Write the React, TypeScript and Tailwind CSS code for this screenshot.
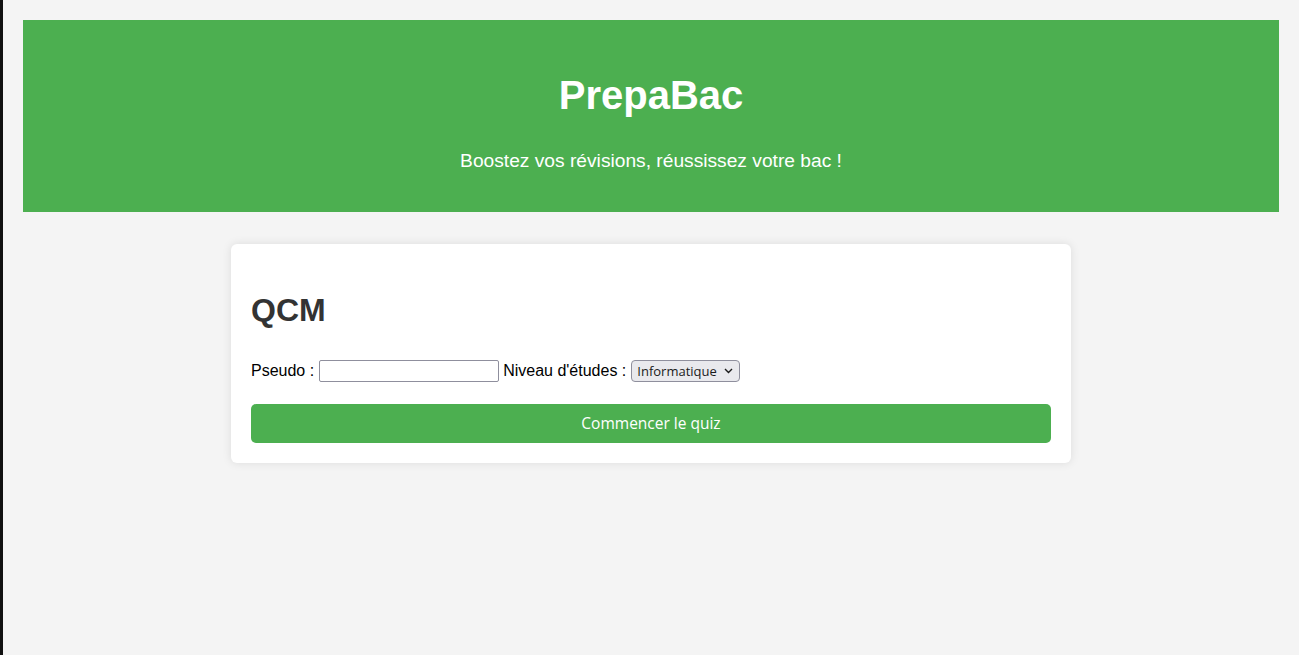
import React from "react";

// ==========================================
// HEADER
// ==========================================
const Header = () => (
  <header className="bg-[#4caf50] text-white text-center h-[192px] pt-[52px]">
    <h1 className="text-[40px] font-bold leading-[46px]">PrepaBac</h1>
    <p className="mt-[32px] text-[19.2px] leading-[22px]">
      Boostez vos révisions, réussissez votre bac !
    </p>
  </header>
);

// ==========================================
// QUIZ FORM
// ==========================================
const QuizCard = () => (
  <div className="w-[840px] mx-auto mt-[32px] bg-white rounded-[6px] shadow-[0_0_10px_rgba(0,0,0,0.1)] px-[20px] pt-[48px] pb-[20px]">
    <h2 className="text-[32px] font-bold leading-[37px] text-[#333]">QCM</h2>
    <form className="mt-[25px]" onSubmit={(e) => e.preventDefault()}>
      <div className="flex items-center h-[34px] text-[16px] text-black">
        <label htmlFor="pseudo">Pseudo :</label>
        <input
          id="pseudo"
          type="text"
          className="ml-[5px] w-[180px] h-[22px] border border-[#8f8f9d] rounded-[2px] bg-white px-[2px]"
        />
        <label htmlFor="niveau" className="ml-[4px]">
          Niveau d'études :
        </label>
        <div className="relative ml-[5px]">
          <select
            id="niveau"
            defaultValue="info"
            className="appearance-none block w-[109px] h-[22px] border border-[#8f8f9d] rounded-[4px] bg-[#e9e9ed] text-[13px] leading-[20px] pl-[5px] text-[#1b1b1b] font-['Open_Sans',sans-serif]"
          >
            <option value="info">Informatique</option>
            <option value="maths">Mathématiques</option>
            <option value="physique">Physique</option>
          </select>
          <svg
            className="absolute right-[7px] top-[8px] pointer-events-none"
            width="9"
            height="6"
            viewBox="0 0 9 6"
            fill="none"
          >
            <path d="M1 1l3.5 3.5L8 1" stroke="#1b1b1b" strokeWidth="1.4" />
          </svg>
        </div>
      </div>
      <button
        type="submit"
        className="mt-[16px] w-full h-[39px] bg-[#4caf50] text-white rounded-[5px] text-[15.5px] font-['Open_Sans',sans-serif]"
      >
        Commencer le quiz
      </button>
    </form>
  </div>
);

export default function App() {
  return (
    <div className="min-h-screen bg-[#f4f4f4] border-l-[3px] border-[#111] p-[20px] font-['Liberation_Sans',Arial,sans-serif]">
      <Header />
      <QuizCard />
    </div>
  );
}
